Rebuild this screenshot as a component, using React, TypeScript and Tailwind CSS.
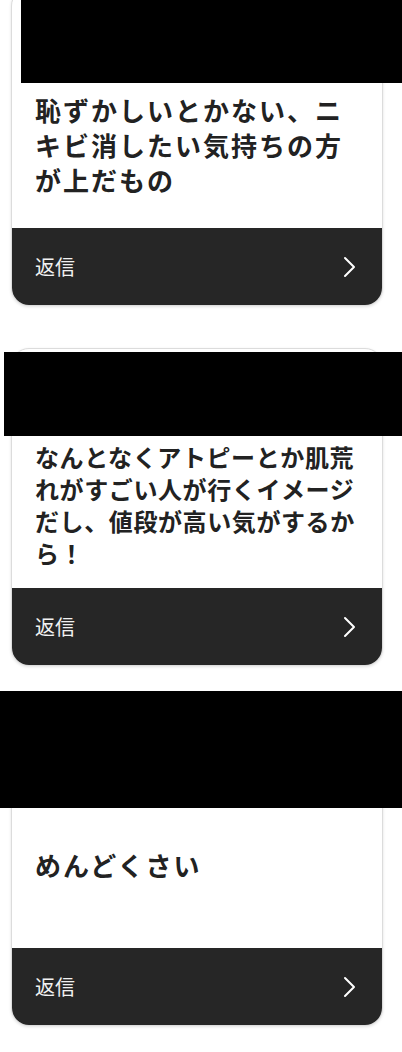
import { ReactNode } from 'react';

// một thẻ trả lời: header (bị che), nội dung, footer "返信"
interface ReplyCardProps {
    children: ReactNode;
    maskClass: string;
    textClass: string;
}

function Chevron() {
    return (
        <svg width="13" height="22" viewBox="0 0 13 22" fill="none" className="block">
            <polyline points="2,2 11,11 2,20" stroke="#ffffff" strokeWidth="2" strokeLinecap="round" strokeLinejoin="round" />
        </svg>
    );
}

function ReplyCard({ children, maskClass, textClass }: ReplyCardProps) {
    return (
        <div className="relative">
            <div className="flex flex-col overflow-hidden rounded-[18px] border border-[#dcdcdc] bg-white shadow-[0_1px_3px_rgba(0,0,0,0.12)]">
                {/* Header: tên người dùng (đã che) */}
                <div className="h-[72px] flex-none" />

                {/* Content */}
                <div className="flex h-[167px] flex-none items-center px-[23px]">
                    <p className={`font-bold text-[#222222] ${textClass}`}>{children}</p>
                </div>

                {/* Footer */}
                <button className="flex h-[77px] flex-none items-center justify-between bg-[#262626] pl-[23px] pr-[26px] text-left">
                    <span className="text-[20px] leading-none text-[#f2f2f2]">返信</span>
                    <Chevron />
                </button>
            </div>

            {/* vùng bị che */}
            <div className={`absolute bg-black ${maskClass}`} />
        </div>
    );
}

export default function App() {
    return (
        <div
            className="min-h-[1052px] overflow-hidden bg-white"
            style={{ fontFamily: '"Noto Sans CJK JP", "Noto Sans", sans-serif' }}
        >
            <div className="-mt-[12px] flex flex-col gap-[42px] pl-[11px] pr-[19px]">
                <ReplyCard
                    maskClass="left-[10px] -right-[19px] -top-[2px] h-[97px]"
                    textClass="text-[26px] leading-[35px] tracking-[2px]"
                >
                    恥ずかしいとかない、ニキビ消したい気持ちの方が上だもの
                </ReplyCard>
                <ReplyCard
                    maskClass="-left-[7px] -right-[19px] top-[4px] h-[84px]"
                    textClass="text-[24px] leading-[32px] tracking-[0.6px]"
                >
                    なんとなくアトピーとか肌荒れがすごい人が行くイメージだし、値段が高い気がするから！
                </ReplyCard>
                <ReplyCard
                    maskClass="-left-[11px] -right-[19px] -top-[17px] h-[117px]"
                    textClass="text-[26px] leading-[35px] tracking-[2px]"
                >
                    めんどくさい
                </ReplyCard>
            </div>
        </div>
    );
}
